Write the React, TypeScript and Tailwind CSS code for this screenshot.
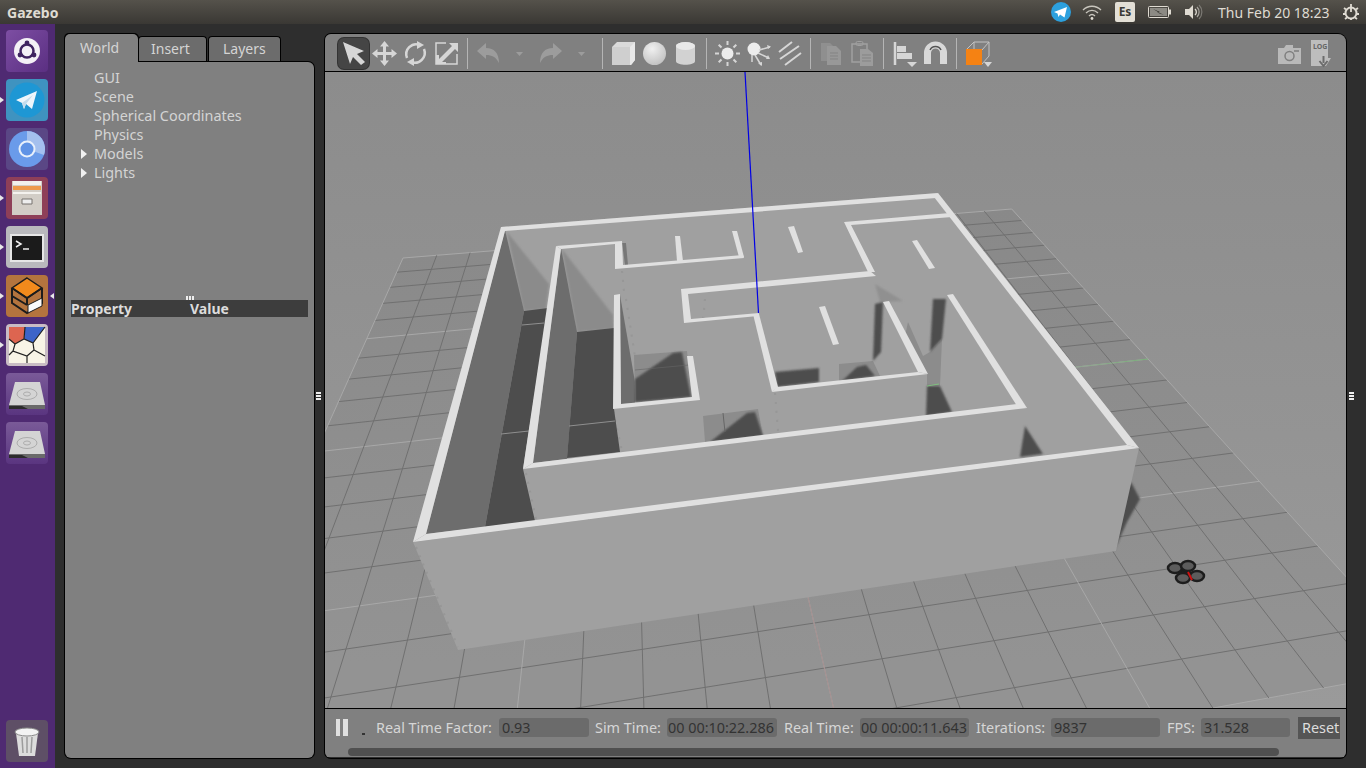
import type { ReactNode } from "react";

const FONT = "font-['Noto_Sans','Liberation_Sans',sans-serif]";

// ground grid: 20 x 20 cells, projected with the two vanishing points of the view
const HX = 6305, HY = -216, VX = 619, VY = -222, A = 0.00575, B = -0.02874;
function project(u: number, v: number): [number, number] {
  const d = 1 + u * A + v * B;
  return [(403 + u * A * HX + v * B * VX) / d, (259 + u * A * HY + v * B * VY) / d];
}

function Poly({ p, f, blur }: { p: string; f: string; blur?: boolean }) {
  return <polygon points={p} fill={f} filter={blur ? "url(#soft)" : undefined} />;
}

const WALL = "#a0a0a0";
const RIM = "#e0e0e0";
const DARK = "#4d4d4d";
const SIDE = "#6d6d6d";
const SHADE = "#8b8b8b";
const FLOOR = "#8c8c8c";

const RIMS = [
  // outer walls
  "501,228 938,194 936,199 505,232 426,535 413,543",
  "938,194 1139,449 1127,446 934,198",
  "413,543 426,535 1127,446 1139,449",
  // second ring
  "556,247 561,250 533,464 523,470",
  "523,470 533,464 1017,405 1027,409",
  "947,296 953,295 1027,409 1017,407",
  // top block
  "556,247 622,242 623,266 743,256 744,259 615,270 615,245 561,250",
  "675,237 680,237 683,262 677,262",
  "732,232 737,232 744,258 739,258",
  // lower left block
  "614,296 620,295 621,405 692,398 687,357 693,357 700,401 613,410",
  // centre block
  "844,223 950,214 952,218 851,226 875,273 868,273",
  "681,290 870,272 876,277 688,295 691,320 759,314 758,317 684,324",
  "753,315 759,315 778,388 772,393",
  "772,393 777,388 918,373 928,375",
  "883,303 889,302 928,375 918,373",
  // free standing strips
  "819,308 825,307 839,345 833,346",
  "788,228 794,227 803,253 798,254",
  "912,242 917,241 935,269 929,270",
];

// faint stitches where the wall segments meet
const SEAMS = [
  "416,548 458,648",
  "622,272 624,292",
  "626,300 637,370",
  "705,300 703,322",
  "613,412 622,452",
  "775,394 778,432",
  "526,474 536,520",
];

function Scene() {
  const rows = Array.from({ length: 21 }, (_, i) => i);
  const line = (a: [number, number], b: [number, number], major: boolean, key: string) => (
    <line key={key} x1={a[0]} y1={a[1]} x2={b[0]} y2={b[1]} stroke={major ? "#a8a8a8" : "#707070"} strokeWidth="1" />
  );
  const corners = [project(0, 0), project(20, 0), project(20, 20), project(0, 20)].map((c) => c.join(",")).join(" ");
  const [ox, oy] = project(10, 10);
  const [gx, gy] = project(20, 10);
  const [rx, ry] = project(10, 20);

  return (
    <svg viewBox="325 73 1021 636" className="block h-[636px] w-[1021px]">
      <defs>
        <linearGradient id="sky" gradientUnits="userSpaceOnUse" x1="0" y1="73" x2="0" y2="709">
          <stop offset="0" stopColor="#8c8c8c" />
          <stop offset="1" stopColor="#9a9a9a" />
        </linearGradient>
        <linearGradient id="axis" gradientUnits="userSpaceOnUse" x1="1080" y1="0" x2="1345" y2="0">
          <stop offset="0" stopColor="#8fa58f" />
          <stop offset="1" stopColor="#35d035" />
        </linearGradient>
        <filter id="soft" x="-20%" y="-20%" width="140%" height="140%">
          <feGaussianBlur stdDeviation="1" />
        </filter>
      </defs>
      <rect x="325" y="73" width="1021" height="636" fill="url(#sky)" />
      <polygon points={corners} fill="#000000" opacity="0.04" />
      {rows.map((i) => line(project(0, i), project(20, i), i % 5 === 0, `r${i}`))}
      {rows.map((i) => line(project(i, 0), project(i, 20), i % 5 === 0, `c${i}`))}
      <line x1={ox} y1={oy} x2={gx} y2={gy} stroke="url(#axis)" />
      <line x1={ox} y1={oy} x2={rx} y2={ry} stroke="#a58f8f" />

      {/* shadow thrown to the right of the maze */}
      <Poly p="1132,485 1140,500 1127,523 1114,552 1128,480" f={DARK} blur />

      {/* maze body */}
      <Poly p="413,543 1139,449 1116,552 458,651" f={WALL} />
      <Poly p="501,228 938,194 1139,449 413,543" f={WALL} />
      {SEAMS.map((s) => (
        <polyline key={s} points={s} stroke="#8e8e8e" strokeDasharray="2 7" strokeWidth="2" fill="none" opacity="0.5" />
      ))}

      {/* left corridors */}
      <Poly p="507,233 524,312 546,310 549,285" f={SHADE} blur />
      <Poly p="562,250 577,333 614,330 613,316" f={SHADE} blur />
      <Poly p="505,231 524,312 485,528 426,535" f={SIDE} />
      <Poly p="524,312 548,309 523,470 535,522 485,528" f={DARK} />
      <line x1="522" y1="326" x2="544" y2="324" stroke="#8f8f8f" />
      <line x1="501" y1="435" x2="529" y2="432" stroke="#8f8f8f" />
      <Poly p="561,249 577,333 567,460 533,464" f={SIDE} />
      <Poly p="577,333 614,329 614,410 620,453 567,459" f={DARK} />
      <line x1="569" y1="427" x2="615" y2="422" stroke="#8f8f8f" />

      {/* openings in the block on the left */}
      <Poly p="620,296 635,383 635,404 621,405" f={SIDE} />
      <Poly p="634,356 687,352 692,398 635,403" f={FLOOR} />
      <Poly p="635,380 673,354 682,353 691,398 635,403" f={DARK} blur />
      <line x1="635" y1="371" x2="689" y2="366" stroke="#666666" opacity="0.6" />
      <Poly p="703,417 758,410 763,437 705,443" f={FLOOR} />
      <Poly p="710,443 747,414 755,413 763,437" f={DARK} blur />
      <line x1="723" y1="414" x2="725" y2="433" stroke="#666666" />
      <Poly p="622,244 625,266 628,266 626,244" f="#777777" />

      {/* openings in the centre */}
      <Poly p="775,373 819,369 819,383 777,388" f={DARK} blur />
      <Poly p="839,365 873,362 880,377 839,382" f={FLOOR} />
      <Poly p="842,382 857,368 866,366 875,377" f={DARK} blur />
      <Poly p="875,285 880,303 903,302" f="#909090" blur />
      <Poly p="875,305 883,303 881,353 873,362" f={DARK} blur />
      <Poly p="908,323 923,357 930,353 942,340 940,387 927,387 927,375 905,337" f={FLOOR} />
      <Poly p="933,300 946,300 942,340 930,353" f={DARK} blur />
      <Poly p="927,387 940,387 952,413 926,417" f={DARK} blur />
      <line x1="927" y1="387" x2="939" y2="385" stroke="#7fc07f" />
      <Poly p="1025,427 1043,455 1020,458" f={DARK} blur />

      {RIMS.map((p) => (
        <polygon key={p} points={p} fill={RIM} />
      ))}
      <line x1="745" y1="73" x2="758.5" y2="314" stroke="#0000e6" strokeWidth="1.2" />

      {/* quadcopter */}
      <g>
        <path d="M1177 570 L1196 578 M1188 568 L1182 579" stroke="#1d1d1d" strokeWidth="6" />
        <ellipse cx="1175" cy="569" rx="7" ry="5" fill="#5c5c5c" stroke="#1d1d1d" strokeWidth="2.5" />
        <ellipse cx="1188" cy="567" rx="7" ry="5" fill="#5c5c5c" stroke="#1d1d1d" strokeWidth="2.5" />
        <ellipse cx="1183" cy="579" rx="7" ry="5" fill="#5c5c5c" stroke="#1d1d1d" strokeWidth="2.5" />
        <ellipse cx="1197" cy="577" rx="7" ry="5" fill="#5c5c5c" stroke="#1d1d1d" strokeWidth="2.5" />
        <line x1="1188" y1="573" x2="1192" y2="581" stroke="#d01010" strokeWidth="2" />
      </g>
    </svg>
  );
}

/* ---------- toolbar ---------- */

function Tool({ children, active }: { children: ReactNode; active?: boolean }) {
  return (
    <div className={active ? "h-[31px] w-[31px] rounded-md bg-[#454545] ring-1 ring-[#333333]" : "h-[31px] w-[31px]"}>
      <svg viewBox="0 0 31 31" className="block h-[31px] w-[31px]">
        {children}
      </svg>
    </div>
  );
}

function Sep() {
  return (
    <div className="flex h-[31px] w-[11px] justify-center">
      <div className="h-full w-px bg-[#b5b5b5]" />
    </div>
  );
}

const ON = "#d6d6d6";
const OFF = "#9c9c9c";

function Toolbar() {
  return (
    <div className="flex h-[38px] items-center border-b border-black bg-[#808080] pl-[13px] pr-[10px] pt-px">
      <Tool active>
        <path d="M5 4 L26 13 L19 16 L27 24 L23 27 L15 19 L12 26 Z" fill={ON} />
      </Tool>
      <Tool>
        <path d="M15.5 5 V26 M5 15.5 H26" stroke={ON} strokeWidth="3" />
        <path d="M15.5 3 L20 8.5 H11 Z M15.5 28 L20 22.5 H11 Z M3 15.5 L8.5 11 V20 Z M28 15.5 L22.5 11 V20 Z" fill={ON} />
      </Tool>
      <Tool>
        <path d="M7 20 A10 10 0 0 1 20 7" fill="none" stroke={ON} strokeWidth="2.5" />
        <path d="M24 11 A10 10 0 0 1 11 24" fill="none" stroke={ON} strokeWidth="2.5" />
        <path d="M17 3 L24 7 L17 11 Z M14 20 L7 24 L14 28 Z" fill={ON} />
      </Tool>
      <Tool>
        <path d="M15 5 H5 V26 H26 V16" fill="none" stroke={ON} strokeWidth="1.5" />
        <path d="M18 5 H27 V14 L24 11 L11 24 H15 V26 H5 V17 H8 V21 L21 8 L18 5 Z" fill={ON} />
      </Tool>
      <Sep />
      <Tool>
        <path d="M4 13 L13 5 V10 C21 10 26 15 26 25 C23 19 19 17 13 17 V21 Z" fill={OFF} />
      </Tool>
      <Tool>
        <path d="M12 14 H19 L15.5 18 Z" fill={OFF} />
      </Tool>
      <Tool>
        <path d="M27 13 L18 5 V10 C10 10 5 15 5 25 C8 19 12 17 18 17 V21 Z" fill={OFF} />
      </Tool>
      <Tool>
        <path d="M12 14 H19 L15.5 18 Z" fill={OFF} />
      </Tool>
      <Sep />
      <Tool>
        <path d="M4 9 L9 4 H27 V22 L23 27 H4 Z" fill="#dadada" />
        <path d="M4 9 H22 V27 H4 Z" fill="#cfcfcf" />
        <path d="M22 9 L27 4 V22 L23 27 H22 Z" fill="#e8e8e8" />
      </Tool>
      <Tool>
        <defs>
          <radialGradient id="ball" cx="0.4" cy="0.3" r="0.8">
            <stop offset="0" stopColor="#f0f0f0" />
            <stop offset="1" stopColor="#bdbdbd" />
          </radialGradient>
        </defs>
        <circle cx="15.5" cy="15.5" r="11.5" fill="url(#ball)" />
      </Tool>
      <Tool>
        <path d="M6 8 C6 3 25 3 25 8 V23 C25 28 6 28 6 23 Z" fill="#d2d2d2" />
        <ellipse cx="15.5" cy="8" rx="9.5" ry="4" fill="#e8e8e8" />
      </Tool>
      <Sep />
      <Tool>
        <circle cx="15.5" cy="15.5" r="6" fill="#ececec" />
        <path d="M15.5 3 V7 M15.5 24 V28 M3 15.5 H7 M24 15.5 H28 M6.7 6.7 L9.5 9.5 M21.5 21.5 L24.3 24.3 M6.7 24.3 L9.5 21.5 M21.5 9.5 L24.3 6.7" stroke={ON} strokeWidth="2" />
      </Tool>
      <Tool>
        <circle cx="11" cy="11" r="6.5" fill="#ececec" />
        <path d="M16 12 L27 9 M15 15 L26 20 M12 17 L18 27 M9 17 L9 24" stroke={ON} strokeWidth="1.5" />
        <path d="M28 8.5 L24 7 L25 11 Z M27 21 L23 21 L25 17 Z M19 28 L15 25 L19 24 Z" fill={ON} />
      </Tool>
      <Tool>
        <path d="M5 14 L18 4 M6 21 L25 8 M11 27 L27 15" stroke={ON} strokeWidth="2" />
      </Tool>
      <Sep />
      <Tool>
        <path d="M5 5 H14 L18 9 V23 H5 Z" fill="#8f8f8f" />
        <path d="M11 8 H20 L25 13 V27 H11 Z" fill="#989898" />
        <path d="M14 15 H22 M14 18 H22 M14 21 H22" stroke="#838383" />
      </Tool>
      <Tool>
        <path d="M5 6 H20 V24 H5 Z" fill="none" stroke="#a0a0a0" strokeWidth="1.5" />
        <rect x="9" y="3.5" width="7" height="4" rx="1.5" fill="none" stroke="#a0a0a0" />
        <path d="M13 11 H21 L26 15 V28 H13 Z" fill="#9c9c9c" />
        <path d="M15 17 H24 M15 20 H24 M15 23 H24" stroke="#838383" />
      </Tool>
      <Sep />
      <Tool>
        <path d="M6 4 V27" stroke={ON} strokeWidth="2.5" />
        <path d="M8 8 H17 V14 H8 Z M8 15 H23 V21 H8 Z" fill={ON} />
        <path d="M18 24 H28 L23 29 Z" fill={ON} />
      </Tool>
      <Tool>
        <path d="M4 26 V15 A11.5 11.5 0 0 1 27 15 V26 H20 V15 A4.5 4.5 0 0 0 11 15 V26 Z" fill="#d8d8d8" />
        <path d="M10 12 A6 6 0 0 1 21 12" fill="none" stroke="#555555" strokeWidth="1.5" />
      </Tool>
      <Sep />
      <Tool>
        <path d="M4 12 L12 4 H27 V18 L20 26" fill="none" stroke="#c2c2c2" strokeWidth="1" />
        <path d="M20 12 L27 4 M12 4 V12" fill="none" stroke="#c2c2c2" strokeWidth="1" />
        <rect x="4" y="11" width="16" height="16" fill="#f58213" />
        <path d="M22 24 H30 L26 29 Z" fill={ON} />
      </Tool>
      <div className="flex-1" />
      <Tool>
        <path d="M4 10 H10 L12 7 H19 V10 H27 V26 H4 Z" fill="#b9b9b9" />
        <circle cx="15.5" cy="18" r="4.5" fill="none" stroke="#7f7f7f" strokeWidth="1.5" />
        <rect x="20" y="12" width="5" height="2" fill="#8c8c8c" />
      </Tool>
      <Tool>
        <path d="M6 2 H23 V20 H26 L21 28 H6 Z" fill="#bdbdbd" />
        <path d="M18.5 18 V25 M14.5 23 L18.5 28 L22.5 23" fill="none" stroke="#6c6c6c" strokeWidth="2" />
        <text x="8" y="11" fontSize="7" fontWeight="700" fill="#666666" className={FONT}>LOG</text>
      </Tool>
    </div>
  );
}

/* ---------- status bar ---------- */

function Stat({ label, value, lw, bw }: { label: string; value: string; lw: string; bw: string }) {
  return (
    <>
      <span className={`${lw} whitespace-nowrap leading-[20px] text-[#d6d6d6]`}>{label}</span>
      <span className={`${bw} h-[19px] overflow-hidden whitespace-nowrap rounded-[3px] bg-[#6b6b6b] px-[1px] leading-[20px] text-[#333333]`}>{value}</span>
    </>
  );
}

function StatusBar() {
  return (
    <div className="h-[49px] border-t border-black bg-[#808080] pt-[9px]">
      <div className="flex h-[19px] items-center gap-[7px] pl-[11px] text-[14.4px]">
        <div className="flex w-[33px] items-end">
          <div className="flex gap-[3px]">
            <div className="h-[17px] w-[4px] bg-[#e0e0e0]" />
            <div className="h-[17px] w-[5px] bg-[#e0e0e0]" />
          </div>
          <div className="mb-[1px] ml-[14px] h-[2px] w-[3px] bg-[#333333]" />
        </div>
        <Stat label="Real Time Factor:" value="0.93" lw="w-[116px]" bw="w-[90px] pl-[3px]" />
        <Stat label="Sim Time:" value="00 00:10:22.286" lw="w-[65px] -ml-px" bw="w-[110px]" />
        <Stat label="Real Time:" value="00 00:00:11.643" lw="w-[69px]" bw="w-[109px]" />
        <Stat label="Iterations:" value="9837" lw="w-[68px]" bw="w-[109px] pl-[3px]" />
        <Stat label="FPS:" value="31.528" lw="w-[27px]" bw="w-[89px] pl-[3px]" />
        <div className="ml-px h-[22px] w-[42px] overflow-hidden whitespace-nowrap bg-[#555555] pl-[4px] leading-[22px] text-[#dddddd]">Reset</div>
      </div>
      <div className="ml-[23px] mt-[11px] h-[8px] w-[931px] rounded-full bg-[#505050]" />
    </div>
  );
}

/* ---------- launcher ---------- */

function Tile({ bg, pip, right, children }: { bg: string; pip?: boolean; right?: boolean; children: ReactNode }) {
  return (
    <div className="relative h-[42px] w-[54px] pl-[6px]">
      {pip && <div className="absolute left-0 top-[18px] h-0 w-0 border-y-[3px] border-l-[4px] border-y-transparent border-l-[#e8e8e8]" />}
      {right && <div className="absolute right-0 top-[18px] h-0 w-0 border-y-[3px] border-r-[4px] border-y-transparent border-r-[#e8e8e8]" />}
      <div className={`h-[42px] w-[42px] overflow-hidden rounded-[4px] ${bg}`}>
        <svg viewBox="0 0 42 42" className="block h-[42px] w-[42px]">
          {children}
        </svg>
      </div>
    </div>
  );
}

function Disk() {
  return (
    <>
      <path d="M9 9 H34 L39 32 V36 H3 V32 Z" fill="#d4d4d4" />
      <path d="M3 32 H39 V36 H3 Z" fill="#6a6a6a" />
      <path d="M3 33 H16 L22 36 H3 Z" fill="#2c2c2c" />
      <ellipse cx="21" cy="21" rx="10" ry="5.5" fill="none" stroke="#acacac" />
      <ellipse cx="21" cy="21" rx="3.5" ry="2" fill="none" stroke="#acacac" />
    </>
  );
}

function Launcher() {
  return (
    <div className="flex h-full w-[55px] shrink-0 flex-col gap-[7px] bg-[#4f2a72] pb-[6px] pt-[6px]">
      <Tile bg="bg-gradient-to-br from-[#7d4ea3] to-[#5b2f82]">
        <circle cx="21" cy="21" r="13" fill="#f4f0f6" />
        <circle cx="21" cy="21" r="6.5" fill="none" stroke="#3f2360" strokeWidth="2.5" />
        <circle cx="21" cy="13" r="2.4" fill="#3f2360" />
        <circle cx="14" cy="25" r="2.4" fill="#3f2360" />
        <circle cx="28" cy="25" r="2.4" fill="#3f2360" />
      </Tile>
      <Tile bg="bg-[#3f93c0]" pip>
        <circle cx="21" cy="21" r="17.5" fill="#1e97d4" />
        <path d="M10 21 L31 12 L26 30 L20 25 L18 30 L16 24 Z" fill="#eef6fb" />
        <path d="M16 24 L27 16 L20 25 L18 30 Z" fill="#c4dcec" />
      </Tile>
      <Tile bg="bg-[#5a4785]">
        <circle cx="21" cy="21" r="18" fill="#6a9bea" />
        <path d="M21 3 A18 18 0 0 1 38 27 L21 21 Z" fill="#a4c0ee" />
        <circle cx="21" cy="21" r="8.5" fill="#e8f0fb" />
        <circle cx="21" cy="21" r="6.5" fill="#5f93e6" />
      </Tile>
      <Tile bg="bg-[#8e3f58]" pip>
        <path d="M6 4 H36 V38 H6 Z" fill="#d2cdc6" />
        <path d="M7 4 H35 V8 H7 Z" fill="#f2f0ec" />
        <path d="M7 9 H35 V13 H7 Z" fill="#ee9a4c" />
        <path d="M7 16 H35" stroke="#f4f2ee" strokeWidth="2" />
        <path d="M16 22 H26 V27 H16 Z" fill="#eeeeee" stroke="#77736e" strokeWidth="1" />
      </Tile>
      <Tile bg="bg-[#b9b9bd]" pip>
        <rect x="4" y="8" width="34" height="28" fill="#e6e6e6" />
        <rect x="6" y="10" width="30" height="24" fill="#1b1b1b" />
        <path d="M10 15 L15 18 L10 21" fill="none" stroke="#f0f0f0" strokeWidth="1.5" />
        <path d="M17 23 H23" stroke="#f0f0f0" strokeWidth="1.5" />
      </Tile>
      <Tile bg="bg-[#b4743e]" pip right>
        <path d="M21 3 L36 13 L21 23 L6 13 Z" fill="#f28a1c" stroke="#1c1c1c" strokeWidth="1.5" />
        <path d="M6 13 V28 L21 38 L36 28 V13 M6 13 L21 23 L36 13 M21 23 V30 M6 21 L21 30" fill="none" stroke="#1c1c1c" strokeWidth="2" />
        <path d="M22 30 L36 23 V31 L22 38 Z" fill="#fafafa" stroke="#1c1c1c" strokeWidth="1" />
      </Tile>
      <Tile bg="bg-[#c9bcc4]" pip>
        <rect x="3" y="3" width="36" height="36" fill="#f8f4e6" />
        <path d="M3 3 H19 L18 15 L9 20 L3 15 Z" fill="#dd6550" />
        <path d="M19 3 H39 L27 19 L18 15 Z" fill="#3c64c8" />
        <path d="M3 15 L9 20 L18 15 L27 19 L28 26 L21 32 L7 27 L9 20 M19 3 L18 15 M39 3 L27 19 M28 26 L39 32 M21 32 L21 39 M7 27 L3 31" fill="none" stroke="#222222" strokeWidth="1.2" />
      </Tile>
      <Tile bg="bg-gradient-to-b from-[#7a5a98] to-[#5a3580]"><Disk /></Tile>
      <Tile bg="bg-gradient-to-b from-[#7a5a98] to-[#5a3580]"><Disk /></Tile>
      <div className="flex-1" />
      <Tile bg="bg-[#5e4f66]">
        <path d="M10 13 H32 L29 36 H13 Z" fill="#dcdcdc" />
        <ellipse cx="21" cy="12" rx="12" ry="4" fill="#f3f3f3" stroke="#8a8a8a" />
        <path d="M16 17 L17 33 M21 17 V33 M26 17 L25 33" stroke="#9c9c9c" strokeWidth="1.5" />
      </Tile>
    </div>
  );
}

/* ---------- top bar ---------- */

function TopBar() {
  return (
    <div className="flex h-6 items-center bg-gradient-to-b from-[#55524b] to-[#3a3834] pl-[7px] pr-[6px] text-[#dfdbd2]">
      <span className="text-[14px] font-bold">Gazebo</span>
      <div className="flex-1" />
      <svg viewBox="0 0 20 20" className="h-5 w-5">
        <circle cx="10" cy="10" r="10" fill="#2ca0de" />
        <path d="M3 10 L16 5 L13.5 15.5 L9 12.5 L7.5 15 L6.5 11.5 Z" fill="#ffffff" />
      </svg>
      <svg viewBox="0 0 20 16" className="ml-[11px] h-4 w-5">
        <path d="M1 6 C6 1 14 1 19 6 M4 9 C7.5 5.5 12.5 5.5 16 9 M7 12 C9 10 11 10 13 12" fill="none" stroke="#c9c6be" strokeWidth="1.3" />
        <circle cx="10" cy="14.5" r="1.4" fill="#dfdbd2" />
      </svg>
      <div className="ml-[13px] h-5 w-5 rounded-[2px] bg-[#e3dfd6] text-center text-[12px] font-bold leading-5 text-[#3c3b37]">Es</div>
      <svg viewBox="0 0 24 12" className="ml-[13px] h-3 w-6">
        <rect x="0.5" y="0.5" width="20" height="11" rx="1" fill="none" stroke="#dfdbd2" />
        <rect x="2" y="2" width="17" height="8" fill="#8c8a84" />
        <path d="M5 3 L12 6 L10 6 L16 9 L9 6.5 L11 6.5 Z" fill="#26241f" />
        <rect x="21" y="3.5" width="2" height="5" fill="#dfdbd2" />
      </svg>
      <svg viewBox="0 0 20 18" className="ml-[12px] h-[18px] w-5">
        <path d="M1 6 H5 L9 2 V16 L5 12 H1 Z" fill="#dfdbd2" />
        <path d="M11 6 A4 4 0 0 1 11 12" fill="none" stroke="#dfdbd2" strokeWidth="1.3" />
        <path d="M13 4 A7 7 0 0 1 13 14" fill="none" stroke="#a8a59e" strokeWidth="1.2" />
        <path d="M15 2 A10 10 0 0 1 15 16" fill="none" stroke="#7c7a74" strokeWidth="1.2" />
      </svg>
      <span className="ml-[14px] w-[112px] whitespace-nowrap text-[14px]">Thu Feb 20 18:23</span>
      <svg viewBox="0 0 18 18" className="ml-[12px] h-[18px] w-[18px]">
        <circle cx="9" cy="10" r="5.5" fill="none" stroke="#dfdbd2" strokeWidth="2" />
        <path d="M9 3 V9 M9 1 V3 M2 5 L4 6.5 M16 5 L14 6.5 M1 11 H3 M15 11 H17 M3 16 L5 14.5 M15 16 L13 14.5 M9 15.5 V17" stroke="#dfdbd2" strokeWidth="1.8" />
      </svg>
    </div>
  );
}

/* ---------- world panel ---------- */

function TreeRow({ label, arrow }: { label: string; arrow?: boolean }) {
  return (
    <div className="flex h-[19px] items-center pl-[16px] text-[14.4px] text-[#d4d4d4]">
      <div className="w-[13px]">
        {arrow && <div className="h-0 w-0 border-y-[5px] border-l-[6px] border-y-transparent border-l-[#f0f0f0]" />}
      </div>
      <span>{label}</span>
    </div>
  );
}

function Grip() {
  return (
    <div className="flex w-[5px] flex-col gap-px">
      <div className="h-[2px] bg-[#eeeeee]" />
      <div className="h-[2px] bg-[#eeeeee]" />
      <div className="h-[2px] bg-[#eeeeee]" />
    </div>
  );
}

function WorldPanel() {
  return (
    <div className="flex h-full w-[249px] shrink-0 flex-col">
      <div className="flex h-7 items-end text-[14px]">
        <div className="relative z-10 -mb-px h-[29px] w-[73px] rounded-t-[5px] bg-[#808080] pl-[15px] pt-[3px] text-[#d4d4d4] shadow-[-1px_-1px_0_0_#000,1px_-1px_0_0_#000]">World</div>
        <div className="h-[26px] w-[69px] rounded-t-[4px] border border-b-0 border-black bg-[#6c6c6c] pl-[12px] pt-[1px] text-[#d4d4d4]">Insert</div>
        <div className="ml-px h-[26px] w-[73px] rounded-t-[4px] border border-b-0 border-black bg-[#6c6c6c] pl-[14px] pt-[1px] text-[#d4d4d4]">Layers</div>
      </div>
      <div className="flex-1 rounded-b-[6px] rounded-tr-[6px] bg-[#808080] pt-[6px] ring-1 ring-black">
        <TreeRow label="GUI" />
        <TreeRow label="Scene" />
        <TreeRow label="Spherical Coordinates" />
        <TreeRow label="Physics" />
        <TreeRow label="Models" arrow />
        <TreeRow label="Lights" arrow />
        <div className="ml-[121px] mt-[114px] flex h-[4px] w-[9px] gap-px">
          <div className="h-[4px] w-[2px] bg-[#eeeeee]" />
          <div className="h-[4px] w-[2px] bg-[#eeeeee]" />
          <div className="h-[4px] w-[2px] bg-[#eeeeee]" />
        </div>
        <div className="mx-[6px] flex h-[17px] bg-[#3d3d3d] text-[14px] font-bold leading-[17px] text-[#dcdcdc]">
          <span className="w-[119px]">Property</span>
          <span>Value</span>
        </div>
      </div>
    </div>
  );
}

export default function App() {
  return (
    <div className={`flex h-[768px] w-[1366px] flex-col overflow-hidden bg-[#2e2e2e] ${FONT}`}>
      <TopBar />
      <div className="flex h-[744px]">
        <Launcher />
        <div className="flex flex-1 py-[10px] pl-[10px]">
          <WorldPanel />
          <div className="flex w-[11px] items-center pl-[2px]">
            <Grip />
          </div>
          <div className="w-[1021px] shrink-0 overflow-hidden rounded-b-[6px] rounded-tl-[6px] rounded-tr-[8px] ring-1 ring-black">
            <Toolbar />
            <Scene />
            <StatusBar />
          </div>
          <div className="flex w-[20px] items-center pl-[3px]">
            <Grip />
          </div>
        </div>
      </div>
    </div>
  );
}
